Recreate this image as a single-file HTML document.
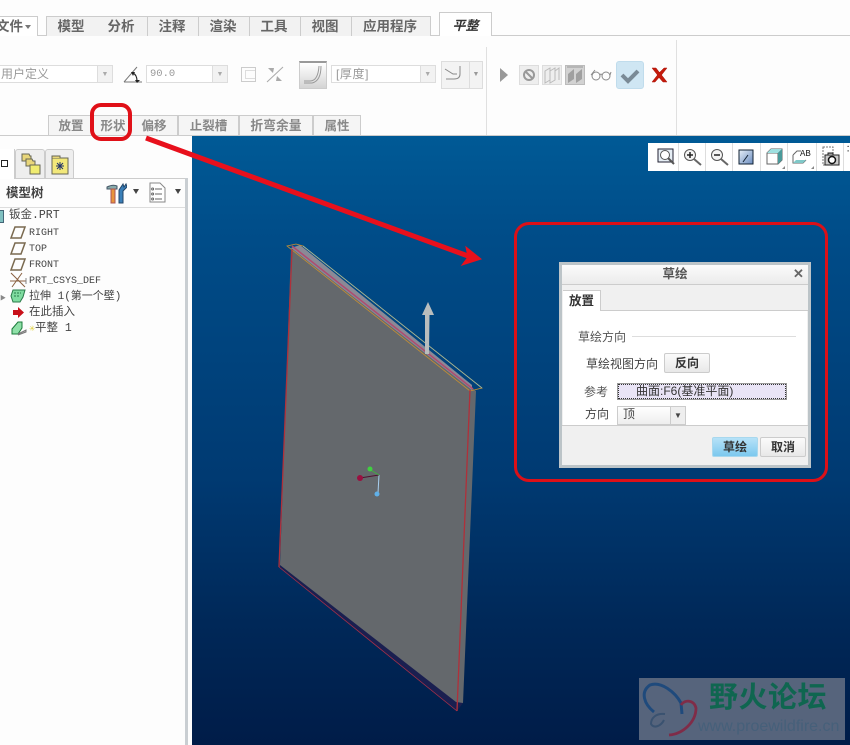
<!DOCTYPE html>
<html><head><meta charset="utf-8">
<style>
html,body{margin:0;padding:0;background:#fff}
#p{position:relative;width:850px;height:745px;overflow:hidden;background:#fdfdfd;font-family:"Liberation Sans","Noto Sans CJK SC",sans-serif;font-size:12px;color:#333}
.a{position:absolute;white-space:nowrap}
.t{position:absolute;top:16px;height:19px;background:#f2f2f2;border:1px solid #ccc;border-bottom:0;border-left:0;text-align:center;text-indent:-2px;line-height:19px;font-weight:bold;font-size:13.5px;color:#666;box-sizing:content-box}
.s{position:absolute;top:115px;height:20px;background:#f5f5f5;border:1px solid #ccc;border-bottom:0;box-sizing:border-box;text-align:center;line-height:20px;font-weight:bold;color:#888;font-size:12.5px}
.f{position:absolute;top:65px;height:18px;border:1px solid #ddd;background:#fff;box-sizing:border-box;color:#999;line-height:17px;font-size:12px}
.dd{position:absolute;right:0;top:0;bottom:0;width:14px;background:#f2f2f2;border-left:1px solid #ddd;color:#aaa;font-size:7px;text-align:center;line-height:17px}
.tr{position:absolute;font-size:11.5px;color:#444;white-space:nowrap;font-family:"Liberation Mono","Noto Sans CJK SC",monospace;line-height:14px}
.tb{position:absolute;top:143px;width:27px;height:28px;border-right:1px solid #ddd;box-sizing:border-box}
.ar{position:absolute;width:0;height:0;border-left:3.5px solid transparent;border-right:3.5px solid transparent;border-top:5px solid #444}
</style></head><body><div id="p">

<!-- ribbon tabs -->
<div class="a" style="left:0;top:35px;width:850px;height:1px;background:#ccc"></div>
<div class="a" style="left:0;top:16px;width:38px;height:20px;background:#fff;border:1px solid #ccc;border-left:0;border-bottom:0;box-sizing:border-box;overflow:hidden"><span class="a" style="left:-4px;top:0;font-weight:bold;font-size:13.5px;line-height:19px;color:#666">文件</span><span class="a" style="left:25px;top:8px;width:0;height:0;border-left:3px solid transparent;border-right:3px solid transparent;border-top:4px solid #777"></span></div>
<div class="t" style="left:46px;width:50px;border-left:1px solid #ccc">模型</div>
<div class="t" style="left:97px;width:50px">分析</div>
<div class="t" style="left:148px;width:50px">注释</div>
<div class="t" style="left:199px;width:50px">渲染</div>
<div class="t" style="left:250px;width:50px">工具</div>
<div class="t" style="left:301px;width:50px">视图</div>
<div class="t" style="left:352px;width:78px">应用程序</div>
<div class="a" style="left:439px;top:12px;width:53px;height:24px;background:#fff;border:1px solid #ccc;border-bottom:0;box-sizing:border-box;text-align:center;line-height:25px;font-weight:bold;font-style:italic;font-size:13px;color:#333">平整</div>

<!-- ribbon content -->
<div class="f" style="left:-2px;width:115px;padding-left:2px">用户定义<div class="dd">▼</div></div>
<svg class="a" style="left:122px;top:64px" width="22" height="20" viewBox="0 0 22 20"><path d="M2 18H20M2 18L15 3" fill="none" stroke="#777"/><path d="M11 9Q15 11 15 17" fill="none" stroke="#222" stroke-width="1.2"/><path d="M9 8L13 8L11 12ZM13 16L18 16L15 19Z" fill="#222"/></svg>
<div class="f" style="left:146px;width:82px;padding-left:3px;font-family:'Liberation Mono',monospace;font-size:10.5px">90.0<div class="dd" style="font-family:'Liberation Sans'">▼</div></div>
<div class="a" style="left:241px;top:67px;width:15px;height:15px;border:1px solid #ccc;box-sizing:border-box"><div style="position:absolute;left:3px;top:2px;right:0;bottom:2px;border:1px solid #ddd;border-right:0"></div></div>
<svg class="a" style="left:266px;top:66px" width="18" height="17" viewBox="0 0 18 17"><path d="M1 16L17 1" stroke="#aaa" fill="none"/><path d="M2 2H8L7 7ZM16 15H10L11 10Z" fill="#aaa"/></svg>
<div class="a" style="left:299px;top:61px;width:28px;height:28px;background:linear-gradient(#fff,#d4d4d4);border:1px solid #ccc;border-top:2px solid #999;box-sizing:border-box"><svg width="26" height="26" style="position:absolute;left:0;top:0"><path d="M4 18H10Q18 18 19 3M4 20H12Q21 18 21 3" fill="none" stroke="#999"/></svg></div>
<div class="f" style="left:331px;width:105px;padding-left:4px;letter-spacing:.6px">[厚度]<div class="dd">▼</div></div>
<div class="a" style="left:441px;top:61px;width:42px;height:28px;background:#f3f3f3;border:1px solid #ddd;box-sizing:border-box"><div style="position:absolute;left:27px;top:0;bottom:0;width:1px;background:#ddd"></div><div style="position:absolute;left:28px;top:0;width:12px;text-align:center;color:#999;font-size:7px;line-height:26px">▼</div><svg width="26" height="26" style="position:absolute;left:0;top:0"><path d="M3 7L11 12H15M18 4V12Q18 17 12 17H4" fill="none" stroke="#888"/></svg></div>
<div class="a" style="left:486px;top:47px;width:1px;height:88px;background:#e0e0e0"></div>
<div class="a" style="left:676px;top:40px;width:1px;height:95px;background:#e0e0e0"></div>

<svg class="a" style="left:500px;top:67px" width="10" height="16"><path d="M0 1L8 8L0 15Z" fill="#999"/></svg>
<div class="a" style="left:519px;top:65px;width:20px;height:20px;background:#eee;border:1px solid #ddd;box-sizing:border-box"><svg width="18" height="18"><circle cx="9" cy="9" r="5" fill="none" stroke="#999" stroke-width="2"/><path d="M5.500 5.500L12.500 12.500" stroke="#999" stroke-width="2"/></svg></div>
<div class="a" style="left:542px;top:65px;width:20px;height:20px;background:#eee;border:1px solid #ddd;box-sizing:border-box"><svg width="18" height="18"><path d="M2 5L7 2V14L2 17ZM7 5L12 2V14L7 17ZM12 5L16 2V14" fill="none" stroke="#bbb"/></svg></div>
<div class="a" style="left:565px;top:65px;width:20px;height:20px;background:#d2d2d2;border:1px solid #bbb;box-sizing:border-box"><svg width="18" height="18"><path d="M2 8L8 3V13L2 17ZM10 8L16 3V13L10 17Z" fill="#a0a0a0"/><path d="M1 1H17" stroke="#999"/></svg></div>
<svg class="a" style="left:590px;top:68px" width="22" height="14"><circle cx="6" cy="8" r="4" fill="none" stroke="#888"/><circle cx="16" cy="8" r="4" fill="none" stroke="#888"/><path d="M10 7Q11 5 12 7M1 7L5 2M20 7L21 4" fill="none" stroke="#888"/></svg>
<div class="a" style="left:616px;top:61px;width:28px;height:28px;background:#cfe6f3;border:1px solid #c0dcec;border-radius:3px;box-sizing:border-box"><svg width="26" height="26"><path d="M5 13L11 19L21 9" fill="none" stroke="#7a8a96" stroke-width="4"/></svg></div>
<svg class="a" style="left:651px;top:67px" width="17" height="16"><path d="M1 1H5L8.500 5.500L13 1H16L10.500 8L16 15H12L8 10.500L4 15H1L6.500 8Z" fill="#c41a0c" stroke="#a81508" stroke-width=".5"/></svg>

<!-- sub tabs -->
<div class="a" style="left:0;top:135px;width:850px;height:1px;background:#ccc"></div>
<div class="s" style="left:48px;width:46px">放置</div>
<div class="s" style="left:91px;width:44px">形状</div>
<div class="s" style="left:131px;width:47px;border-left:0">偏移</div>
<div class="s" style="left:178px;width:61px">止裂槽</div>
<div class="s" style="left:239px;width:74px;font-size:12.8px">折弯余量</div>
<div class="s" style="left:313px;width:48px">属性</div>

<!-- viewport -->
<div class="a" style="left:192px;top:136px;width:658px;height:609px;background:linear-gradient(#005a96 0,#004c88 17%,#003a72 56%,#002858 80%,#001c48 100%)"></div>

<!-- left panel -->
<div class="a" style="left:0;top:136px;width:192px;height:609px;background:#fdfdfd"></div>
<div class="a" style="left:185px;top:178px;width:3px;height:567px;background:#c9ced2"></div>
<div class="a" style="left:0;top:178px;width:185px;height:1px;background:#ccc"></div>
<div class="a" style="left:0;top:207px;width:185px;height:1px;background:#ddd"></div>
<div class="a" style="left:0;top:149px;width:15px;height:30px;background:#fff;border-right:1px solid #ccc;box-sizing:border-box"><div style="position:absolute;left:1px;top:11px;width:5px;height:5px;border:1px solid #222"></div></div>
<div class="a" style="left:15px;top:149px;width:30px;height:29px;background:#eee;border:1px solid #ccc;border-bottom:0;border-radius:3px 3px 0 0;box-sizing:border-box"><svg width="28" height="27"><path d="M6 4H13L14 6H15V11H6Z" fill="#e8d67a" stroke="#665"/><path d="M10 9H16L17 11H19V16H10Z" fill="#e8d67a" stroke="#665"/><path d="M14 15H24V24H14Z" fill="#f0ec70" stroke="#665"/></svg></div>
<div class="a" style="left:45px;top:149px;width:29px;height:29px;background:#eee;border:1px solid #ccc;border-bottom:0;border-radius:3px 3px 0 0;box-sizing:border-box"><svg width="27" height="27"><path d="M6 8H22V24H6Z" fill="#f2e87a" stroke="#665"/><path d="M6 8V6H14V8" fill="#e8d67a" stroke="#665"/><path d="M14 12V20M10 16H18M11 13L17 19M17 13L11 19" stroke="#22346a"/></svg></div>

<div class="a" style="left:6px;top:182px;font-weight:bold;font-size:12.5px;color:#444">模型树</div>
<svg class="a" style="left:105px;top:182px" width="22" height="23"><path d="M2 5Q8 2 12 4V7H2Z" fill="#8aa" stroke="#456"/><path d="M6 7H10V21H6Z" fill="#e8943a" stroke="#a55"/><path d="M14 8L18 2L19 5L21 2L22 5L18 9V21H14Z" fill="#3a7fb8" stroke="#246"/></svg>
<div class="ar" style="left:133px;top:189px"></div>
<svg class="a" style="left:149px;top:182px" width="17" height="21"><path d="M1 1H11L16 6V20H1Z" fill="#fff" stroke="#888"/><path d="M6 7H13M6 12H13M6 17H13" stroke="#666"/><circle cx="3.600" cy="7" r="1" fill="none" stroke="#666"/><circle cx="3.600" cy="12" r="1" fill="none" stroke="#666"/><circle cx="3.600" cy="17" r="1" fill="none" stroke="#666"/></svg>
<div class="ar" style="left:175px;top:189px"></div>

<!-- tree -->
<div class="a" style="left:-3px;top:210px;width:7px;height:13px;background:#7fc0c0;border:1px solid #467;box-sizing:border-box"></div>
<div class="tr" style="left:9px;top:209px">钣金.PRT</div>
<svg class="a" style="left:10px;top:226px" width="16" height="13"><path d="M5 1H15L11 12H1Z" fill="none" stroke="#7a6a50" stroke-width="1.500"/></svg>
<div class="tr" style="left:29px;top:227px;font-size:10px">RIGHT</div>
<svg class="a" style="left:10px;top:242px" width="16" height="13"><path d="M5 1H15L11 12H1Z" fill="none" stroke="#7a6a50" stroke-width="1.500"/></svg>
<div class="tr" style="left:29px;top:243px;font-size:10px">TOP</div>
<svg class="a" style="left:10px;top:258px" width="16" height="13"><path d="M5 1H15L11 12H1Z" fill="none" stroke="#7a6a50" stroke-width="1.500"/></svg>
<div class="tr" style="left:29px;top:259px;font-size:10px">FRONT</div>
<svg class="a" style="left:9px;top:272px" width="18" height="16"><path d="M2 1L16 15M13 1L3 15M1 9H17" stroke="#8a6040" fill="none"/><path d="M17 6V12" stroke="#888"/></svg>
<div class="tr" style="left:29px;top:275px;font-size:10px">PRT_CSYS_DEF</div>
<div class="a" style="left:0;top:293px;font-size:6px;color:#888">▶</div>
<svg class="a" style="left:10px;top:288px" width="16" height="15"><path d="M3 2H15L13 9L10 14H3L1 8Z" fill="#7fdca0" stroke="#2a7a4a"/><path d="M4 5L11 5M4 8L10 8" stroke="#2a7a4a" stroke-dasharray="2 1"/></svg>
<div class="tr" style="left:29px;top:290px;font-size:11px">拉伸 1(第一个壁)</div>
<svg class="a" style="left:12px;top:306px" width="13" height="13"><path d="M1 4H6V1L12 6.500L6 12V9H1Z" fill="#c8101a"/></svg>
<div class="tr" style="left:29px;top:306px">在此插入</div>
<svg class="a" style="left:10px;top:320px" width="17" height="16"><path d="M2 9L8 2H12V8L8 14H2Z" fill="#8fe0a8" stroke="#1a7a3a"/><path d="M8 14L16 10V12L8 15" fill="#bbb" stroke="#777"/></svg>
<div class="tr" style="left:29px;top:322px"><span style="color:#e0d040;font-size:10px">✳</span>平整 1</div>

<!-- view toolbar -->
<div class="a" style="left:648px;top:143px;width:202px;height:28px;background:#fff"></div>
<div class="tb" style="left:652px"><svg width="26" height="26"><path d="M6 7H21V20H6Z" fill="#e6eef5" stroke="#223" transform="translate(0 -1)"/><circle cx="13" cy="12" r="4.500" fill="#fff" stroke="#555"/><path d="M16 15L22 21" stroke="#555" stroke-width="2"/></svg></div>
<div class="tb" style="left:679px"><svg width="26" height="26"><circle cx="11" cy="12" r="5.500" fill="#f4f4f4" stroke="#555"/><path d="M8 12H14M11 9V15" stroke="#222" stroke-width="1.500"/><path d="M15 16L22 22" stroke="#666" stroke-width="2"/></svg></div>
<div class="tb" style="left:706px"><svg width="26" height="26"><circle cx="11" cy="12" r="5.500" fill="#f4f4f4" stroke="#555"/><path d="M8 12H14" stroke="#222" stroke-width="1.500"/><path d="M15 16L22 22" stroke="#666" stroke-width="2"/></svg></div>
<div class="tb" style="left:733px;width:28px"><svg width="26" height="26"><defs><linearGradient id="g" x1="0" y1="0" x2="1" y2="1"><stop offset="0" stop-color="#e8f0f8"/><stop offset="1" stop-color="#6a8cc0"/></linearGradient></defs><path d="M6 7H20V21H6Z" fill="url(#g)" stroke="#123"/><path d="M10 19L15 12" stroke="#123"/></svg></div>
<div class="tb" style="left:761px;width:27px"><svg width="26" height="26"><path d="M6 10L10 6H21V17L17 21H6Z" fill="#fff" stroke="#666"/><path d="M6 10H17V21M17 10L21 6" fill="none" stroke="#666"/><path d="M10 6H21L17 10H6Z" fill="#9fe0e0"/><path d="M21 6V17L17 21V10Z" fill="#4a9a9a"/></svg><div style="position:absolute;right:2px;bottom:2px;border-left:3px solid transparent;border-bottom:3px solid #888"></div></div>
<div class="tb" style="left:788px;width:29px"><svg width="26" height="26"><path d="M5 12L9 8H13M5 12V20H15L18 17" fill="none" stroke="#666"/><path d="M5 20H15L18 17H8Z" fill="#7fc8c8"/><text x="12" y="13" font-size="9" font-family="Liberation Mono" fill="#222">AB</text></svg><div style="position:absolute;right:2px;bottom:2px;border-left:3px solid transparent;border-bottom:3px solid #888"></div></div>
<div class="tb" style="left:817px;width:27px"><svg width="26" height="26"><path d="M6 4H16V22H6Z" fill="#fff" stroke="#777" stroke-dasharray="2 1"/><path d="M8 12H22V22H8Z" fill="#ccc" stroke="#222"/><circle cx="15" cy="17" r="3.500" fill="#fff" stroke="#111" stroke-width="1.500"/><path d="M11 12V10H16V12" fill="#999" stroke="#222"/></svg></div>
<div class="a" style="left:846px;top:145px;width:3px;height:24px;color:#222;font-size:9px;line-height:9px">∷</div>

<!-- 3D part -->
<svg class="a" style="left:192px;top:136px;overflow:visible" width="658" height="609" viewBox="192 136 658 609">
<path d="M279 567L457 711L463 703L456 700L280 565Z" fill="#1a1f50"/>
<path d="M291 248L476 391L463 703L456 702L280 565Z" fill="#64686c"/>
<path d="M291 248L300 245L472 385L472 390Z" fill="#8a8a96"/>
<path d="M292 246L473 389" stroke="#b04a70" stroke-width="1.500"/>
<path d="M287 246L296 244L303 246L482 388L470 391Z" fill="none" stroke="#c89030" stroke-width="0.800"/>
<path d="M303 246L482 388" stroke="#a0b8a0" stroke-width="0.800" fill="none"/>
<path d="M292 249L279 567M470 390L457 711" stroke="#b0303a" stroke-width="1.300" fill="none"/>
<path d="M279 567L457 711" stroke="#a83048" stroke-width=".8" fill="none"/>
<path d="M425 354L425 315H422L428 302L434 315H429.500L429 354Z" fill="#b9bdbd"/>
<path d="M379 475L378 493" stroke="#a8d0f0" stroke-width="1"/><path d="M379 475L360 478" stroke="#501030" stroke-width="1"/><path d="M379 475L369 469" stroke="#40b040" stroke-width="1"/>
<circle cx="360" cy="478" r="3" fill="#9a1040"/><circle cx="370" cy="469" r="2.500" fill="#40d040"/><circle cx="377" cy="494" r="2.500" fill="#60b0e8"/>
</svg>

<!-- annotation red -->
<div class="a" style="left:90px;top:103px;width:42px;height:38px;border:4px solid #e01018;border-radius:11px;box-sizing:border-box"></div>
<svg class="a" style="left:0;top:0" width="850" height="745"><path d="M146 138L468 256" stroke="#e8101c" stroke-width="5" fill="none"/><path d="M481 259L462 265L468 257L466 247Z" fill="#e8101c" stroke="#e8101c"/></svg>
<div class="a" style="left:514px;top:222px;width:314px;height:260px;border:3px solid #dc1018;border-radius:15px;box-sizing:border-box"></div>

<!-- dialog -->
<div class="a" style="left:559px;top:262px;width:252px;height:206px;background:#f0f0f0;border:3px solid #bcc4c8;box-sizing:border-box">
 <div class="a" style="left:0;top:0;width:246px;height:19px;background:linear-gradient(#fbfbfb,#ebebeb);border-bottom:1px solid #ccc"></div>
 <div class="a" style="left:0;top:0;width:226px;text-align:center;line-height:19px;font-weight:bold;font-size:12.5px;color:#555">草绘</div>
 <div class="a" style="left:231px;top:-1px;font-size:13px;font-weight:bold;color:#666;line-height:20px">✕</div>
 <div class="a" style="left:1px;top:25px;width:38px;height:21px;background:#fff;border:1px solid #ccc;border-bottom:0;border-left:0;box-sizing:border-box;font-weight:bold;line-height:20px;text-align:center;color:#333;font-size:12.5px;z-index:2">放置</div>
 <div class="a" style="left:38px;top:45px;width:208px;height:1px;background:#ccc"></div>
 <div class="a" style="left:1px;top:46px;width:244px;height:114px;background:#fff"></div>
 <div class="a" style="left:16px;top:63px;color:#555">草绘方向</div>
 <div class="a" style="left:70px;top:71px;width:164px;height:1px;background:#ddd"></div>
 <div class="a" style="left:24px;top:90px;color:#444">草绘视图方向</div>
 <div class="a" style="left:102px;top:88px;width:46px;height:20px;background:linear-gradient(#fbfbfb,#e8e8e8);border:1px solid #ccc;border-radius:2px;box-sizing:border-box;text-align:center;line-height:19px;font-weight:bold;color:#333">反向</div>
 <div class="a" style="left:22px;top:118px;color:#555">参考</div>
 <div class="a" style="left:55px;top:118px;width:170px;height:17px;background:#e9e4f6;border:1px solid #999;outline:1px dotted #333;outline-offset:-2px;box-sizing:border-box;line-height:15px;padding-left:18px;color:#333;font-size:12px">曲面:F6(基准平面)</div>
 <div class="a" style="left:23px;top:140px;color:#444">方向</div>
 <div class="a" style="left:55px;top:141px;width:69px;height:19px;background:linear-gradient(#fff,#eee);border:1px solid #ccc;box-sizing:border-box;line-height:15px;padding-left:5px;color:#444">顶<div class="a" style="right:0;top:0;width:14px;height:17px;border-left:1px solid #ccc;background:#eee;text-align:center;font-size:8px;color:#444;padding:0;line-height:17px">▼</div></div>
 <div class="a" style="left:0;top:160px;width:246px;height:1px;background:#ccc"></div>
 <div class="a" style="left:150px;top:172px;width:46px;height:20px;background:linear-gradient(#b6e2f8,#7cc8ee);border:1px solid #a8d8ee;border-radius:2px;box-sizing:border-box;text-align:center;line-height:19px;font-weight:bold;color:#333">草绘</div>
 <div class="a" style="left:198px;top:172px;width:46px;height:20px;background:linear-gradient(#fbfbfb,#e8e8e8);border:1px solid #ccc;border-radius:2px;box-sizing:border-box;text-align:center;line-height:19px;font-weight:bold;color:#333">取消</div>
</div>

<!-- watermark -->
<div class="a" style="left:639px;top:678px;width:206px;height:62px;background:#56647c"></div>
<svg class="a" style="left:639px;top:678px" width="62" height="62"><path d="M15 34C5 26 1 14 11 7C22 3 36 14 42 25L43 36" fill="none" stroke="#1f4a7c" stroke-width="3"/><path d="M42 27C46 21 55 22 57 30C57 44 44 56 30 57" fill="none" stroke="#7f2c48" stroke-width="2.800"/><path d="M26 36C17 35 12 40 12 46C15 51 22 48 25 42" fill="none" stroke="#3a5270" stroke-width="2"/></svg>
<div class="a" style="left:709px;top:682px;font-size:29px;font-weight:bold;color:#0f6650;line-height:32px;letter-spacing:.5px">野火论坛</div>
<div class="a" style="left:698px;top:717px;font-size:16px;color:#46607a;line-height:20px">www.proewildfire.cn</div>

</div></body></html>
